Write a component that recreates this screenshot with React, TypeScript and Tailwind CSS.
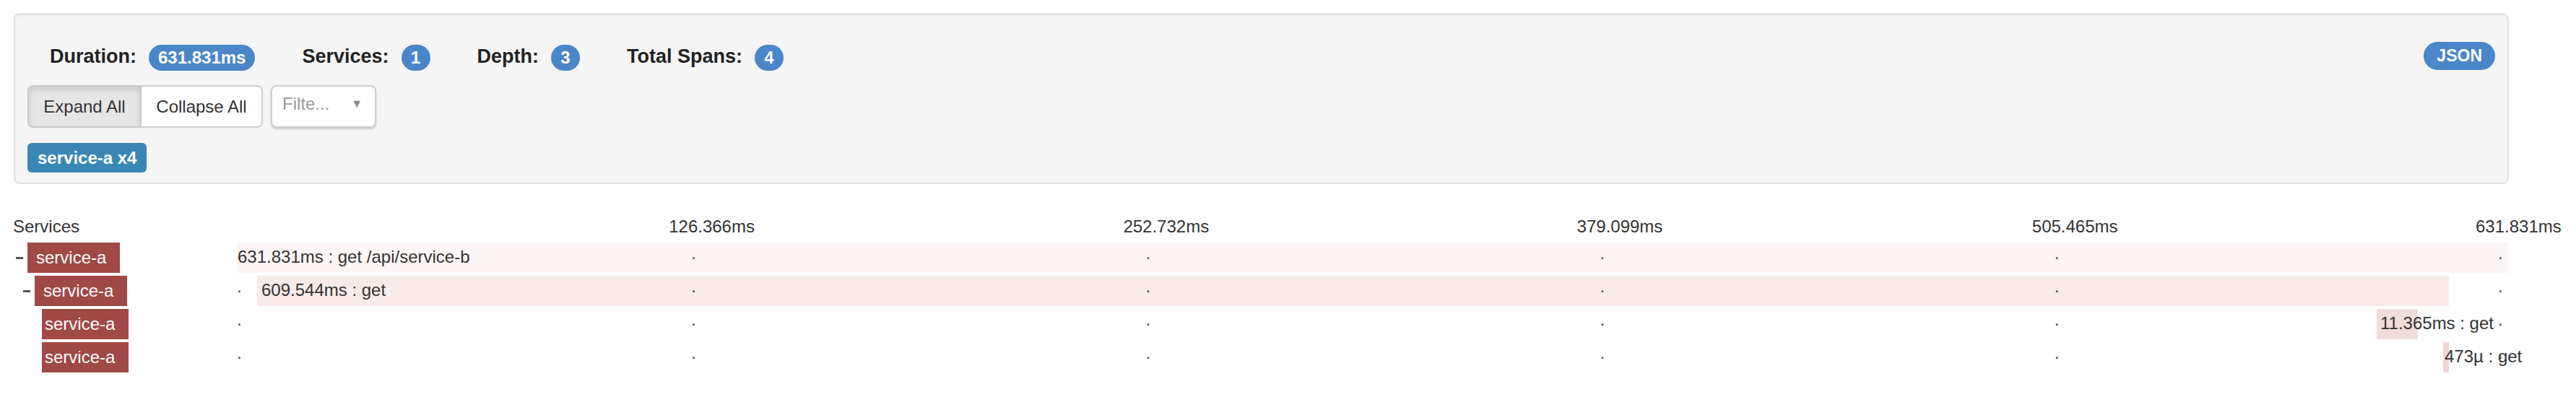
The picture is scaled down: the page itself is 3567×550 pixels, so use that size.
import React from "react";

const TOTAL = 631.831;
const W = 3146;

type Row = {
  padClass: string;
  dash: boolean;
  boxPad: string;
  start: number;
  dur: number;
  label: string;
  bg: string;
  textOffset: number;
  minW: number;
};

const rows: Row[] = [
  { padClass: "pl-[22px]", dash: true, boxPad: "pl-[12px]", start: 0, dur: 631.831, label: "631.831ms : get /api/service-b", bg: "#fcf5f5", textOffset: 1, minW: 0 },
  { padClass: "pl-[32px]", dash: true, boxPad: "pl-[12px]", start: 5.623, dur: 609.544, label: "609.544ms : get", bg: "#f9eaea", textOffset: 6, minW: 0 },
  { padClass: "pl-[42px]", dash: false, boxPad: "pl-[4px]", start: 595.08, dur: 11.365, label: "11.365ms : get", bg: "#f2dbdb", textOffset: 5, minW: 0 },
  { padClass: "pl-[42px]", dash: false, boxPad: "pl-[4px]", start: 613.56, dur: 0.473, label: "473\u00b5 : get", bg: "#f0d5d5", textOffset: 2, minW: 8 },
];

function Stat({ label, value, first, wide }: { label: string; value: string; first?: boolean; wide?: boolean }) {
  return (
    <div className={"flex items-center " + (first ? "" : "ml-[65px]")}>
      <span className="text-[27px] font-bold text-[#222] mb-[4px] leading-none">{label}</span>
      <span
        className={
          "ml-[17px] h-[36px] rounded-full bg-[#4a86c8] text-white font-bold text-[24px] leading-[36px] text-center " +
          (wide ? "px-[13px]" : "w-[40px]")
        }
      >
        {value}
      </span>
    </div>
  );
}

function Dots() {
  return (
    <>
      <span className="absolute left-[0%] top-[3px] text-[24px] leading-[24px] text-[#444]">.</span>
      <span className="absolute left-[20%] top-[3px] text-[24px] leading-[24px] text-[#444]">.</span>
      <span className="absolute left-[40%] top-[3px] text-[24px] leading-[24px] text-[#444]">.</span>
      <span className="absolute left-[60%] top-[3px] text-[24px] leading-[24px] text-[#444]">.</span>
      <span className="absolute left-[80%] top-[3px] text-[24px] leading-[24px] text-[#444]">.</span>
      <span className="absolute left-[calc(100%-15px)] top-[3px] text-[24px] leading-[24px] text-[#444]">.</span>
    </>
  );
}

export default function App() {
  return (
    <div className="w-[3567px] h-[550px] bg-white overflow-hidden font-['Liberation_Sans',Arial,sans-serif] text-[#333]">
      <div className="pt-[18px]">
        <div className="ml-[19px] w-[3455px] h-[237px] bg-[#f5f5f5] border-2 border-[#e3e3e3] rounded-[8px] shadow-[inset_0_2px_2px_rgba(0,0,0,0.05)] px-[17px] pt-[38px]">
          <div className="flex items-start justify-between h-[40px]">
            <div className="flex items-center mt-[4px] h-[36px] ml-[31px]">
              <Stat label="Duration:" value="631.831ms" first wide />
              <Stat label="Services:" value="1" />
              <Stat label="Depth:" value="3" />
              <Stat label="Total Spans:" value="4" />
            </div>
            <span className="h-[39px] px-[18px] rounded-full bg-[#4a86c8] text-white font-bold text-[23px] leading-[39px]">
              JSON
            </span>
          </div>
          <div className="mt-[20px] flex items-center">
            <div className="flex">
              <button className="w-[158px] h-[59px] border-2 border-[#c8c8c8] bg-[#e6e6e6] rounded-l-[8px] shadow-[inset_0_5px_8px_rgba(0,0,0,0.12)] text-[24px] text-[#333]">
                Expand All
              </button>
              <button className="w-[168px] h-[59px] border-2 border-l-0 border-[#ccc] bg-white rounded-r-[8px] text-[24px] text-[#333]">
                Collapse All
              </button>
            </div>
            <div className="ml-[11px] w-[146px] h-[59px] border-2 border-[#ccc] rounded-[8px] bg-white shadow-[0_2px_3px_rgba(0,0,0,0.18)] flex items-center justify-between pl-[14px] pr-[17px] pb-[7px]">
              <span className="text-[24px] text-[#999]">Filte...</span>
              <span className="text-[16px] text-[#888]">▼</span>
            </div>
          </div>
          <div className="mt-[21px] flex">
            <span className="h-[41px] px-[14px] rounded-[6px] bg-[#3a87b5] text-white font-bold text-[24px] leading-[41px]">
              service-a x4
            </span>
          </div>
        </div>
      </div>

      <div className="mt-[42px] flex h-[34px] text-[24px] leading-[34px] text-[#333]">
        <div className="w-[328px] shrink-0 pl-[18px]">Services</div>
        <div className="relative w-[3146px] h-[34px]">
          <span className="absolute left-[calc(20%-31px)] top-0 whitespace-nowrap">126.366ms</span>
          <span className="absolute left-[calc(40%-31px)] top-0 whitespace-nowrap">252.732ms</span>
          <span className="absolute left-[calc(60%-32px)] top-0 whitespace-nowrap">379.099ms</span>
          <span className="absolute left-[calc(80%-31px)] top-0 whitespace-nowrap">505.465ms</span>
          <span className="absolute left-[calc(100%-46px)] top-0 whitespace-nowrap">631.831ms</span>
        </div>
      </div>

      <div className="mt-[3px] flex flex-col">
        {rows.map((r, i) => {
          const left = (r.start / TOTAL) * W;
          const width = Math.max(r.minW, (r.dur / TOTAL) * W);
          return (
            <div key={i} className="flex h-[46px] py-[2px]">
              <div className={"w-[328px] shrink-0 flex items-center " + r.padClass}>
                <div className="w-[16px] flex items-center">
                  {r.dash ? <span className="block w-[10px] h-[3px] bg-[#555]" /> : null}
                </div>
                <div
                  className={
                    "h-[42px] bg-[#a04946] text-white text-[24px] leading-[42px] pr-[19px] whitespace-nowrap " + r.boxPad
                  }
                >
                  service-a
                </div>
              </div>
              <div className="relative w-[3146px] h-[42px]">
                <div className="absolute top-0 h-[42px]" style={{ left, width, background: r.bg }} />
                <Dots />
                <span
                  className="absolute top-0 text-[24px] leading-[40px] text-[#333] whitespace-nowrap"
                  style={{ left: left + r.textOffset }}
                >
                  {r.label}
                </span>
              </div>
            </div>
          );
        })}
      </div>
    </div>
  );
}
